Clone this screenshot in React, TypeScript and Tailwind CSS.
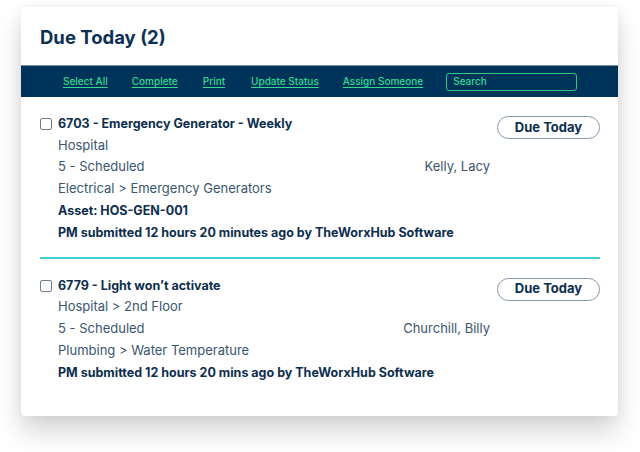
import React from "react";

interface WorkOrder {
  id: string;
  title: string;
  location: string;
  status: string;
  assignee: string;
  category: string;
  asset?: string;
  submitted: string;
}

const orders: WorkOrder[] = [
  {
    id: "6703",
    title: "Emergency Generator - Weekly",
    location: "Hospital",
    status: "5 - Scheduled",
    assignee: "Kelly, Lacy",
    category: "Electrical > Emergency Generators",
    asset: "HOS-GEN-001",
    submitted: "PM submitted 12 hours 20 minutes ago by TheWorxHub Software",
  },
  {
    id: "6779",
    title: "Light won\u2019t activate",
    location: "Hospital > 2nd Floor",
    status: "5 - Scheduled",
    assignee: "Churchill, Billy",
    category: "Plumbing > Water Temperature",
    submitted: "PM submitted 12 hours 20 mins ago by TheWorxHub Software",
  },
];

// left margin before each toolbar link, tuned to the design
const actions = [
  { label: "Select All", ml: "" },
  { label: "Complete", ml: "ml-[24px]" },
  { label: "Print", ml: "ml-[25px]" },
  { label: "Update Status", ml: "ml-[26px]" },
  { label: "Assign Someone", ml: "ml-[24px]" },
];

function OrderItem({ order }: { order: WorkOrder }) {
  return (
    <div className="flex items-start">
      <div className="w-[18px] pt-[5px]">
        <div className="w-[12px] h-[12px] border border-[#6f7f90] rounded-[2px] bg-white" />
      </div>
      <div className="w-[432px] text-[13px] leading-[21.7px] text-[#38566f]">
        <div className="font-bold text-[12.5px] text-[#0d2e4e]">
          {order.id} - {order.title}
        </div>
        <div>{order.location}</div>
        <div className="flex justify-between">
          <span>{order.status}</span>
          <span>{order.assignee}</span>
        </div>
        <div>{order.category}</div>
        {order.asset && (
          <div className="font-bold text-[12.5px] text-[#0d2e4e]">Asset: {order.asset}</div>
        )}
        <div className="font-bold text-[12.5px] text-[#0d2e4e]">{order.submitted}</div>
      </div>
      <button className="ml-auto mt-[3px] w-[103px] h-[23px] rounded-full border border-[#8598ad] text-[13px] font-bold text-[#0d2e4e] flex items-center justify-center font-['Inter',sans-serif]">
        Due Today
      </button>
    </div>
  );
}

export default function App() {
  return (
    <div className="w-[640px] h-[452px] bg-white pt-[7px] pl-[21px] font-['Inter',sans-serif]">
      <div className="w-[597px] h-[409px] bg-white rounded-[4px] shadow-[0_16px_26px_rgba(0,0,0,0.16),0_0_14px_rgba(0,0,0,0.06)] overflow-hidden">
        <div className="h-[58px] pl-[19px] pt-[18px]">
          <h1 className="text-[18.5px] leading-[24px] font-bold text-[#0d3054]">Due Today (2)</h1>
        </div>
        <div className="h-[32px] bg-[#00335a] border-t border-[#7d8fa3] flex items-center pl-[42px]">
          {actions.map((a) => (
            <a
              key={a.label}
              className={`text-[10px] font-medium text-[#34d98f] underline underline-offset-2 ${a.ml}`}
            >
              {a.label}
            </a>
          ))}
          <div className="ml-[23px] w-[131px] h-[18px] border border-[#2fc985] rounded-[3px] flex items-center pl-[6px] text-[10px] font-medium text-[#34d98f]">
            Search
          </div>
        </div>
        <div className="pl-[19px] pr-[18px]">
          <div className="pt-[16px] pb-[14px]">
            <OrderItem order={orders[0]} />
          </div>
          <div className="h-[1.5px] bg-[#3fd0d7]" />
          <div className="pt-[16px]">
            <OrderItem order={orders[1]} />
          </div>
        </div>
      </div>
    </div>
  );
}
